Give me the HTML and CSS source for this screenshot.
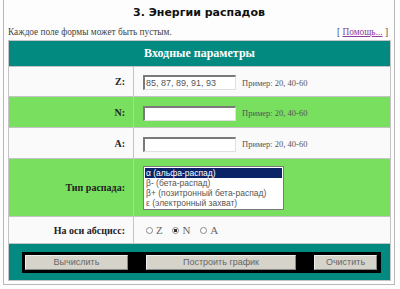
FILE: index.html
```html
<!DOCTYPE html>
<html>
<head>
<meta charset="utf-8">
<link rel="stylesheet" href="styles.css">
</head>
<body>
<div class="page">
  <h1 class="title">3. Энергии распадов</h1>
  <div class="intro">
    <span>Каждое поле формы может быть пустым.</span>
    <span>[ <a href="#" class="help">Помощь...</a> ]</span>
  </div>
  <table class="form">
    <colgroup><col class="c1"><col class="c2"></colgroup>
    <tr><th colspan="2" class="head">Входные параметры</th></tr>
    <tr class="row-white h-z">
      <td class="label">Z:</td>
      <td class="field"><span class="input">85, 87, 89, 91, 93</span><span class="hint">Пример: 20, 40-60</span></td>
    </tr>
    <tr class="row-green h-n">
      <td class="label">N:</td>
      <td class="field"><span class="input"></span><span class="hint">Пример: 20, 40-60</span></td>
    </tr>
    <tr class="row-white h-a">
      <td class="label">A:</td>
      <td class="field"><span class="input"></span><span class="hint">Пример: 20, 40-60</span></td>
    </tr>
    <tr class="row-green h-type">
      <td class="label">Тип распада:</td>
      <td class="field">
        <div class="select">
          <div class="opt sel">α (альфа-распад)</div>
          <div class="opt">β- (бета-распад)</div>
          <div class="opt">β+ (позитронный бета-распад)</div>
          <div class="opt">ε (электронный захват)</div>
        </div>
      </td>
    </tr>
    <tr class="row-white h-axis">
      <td class="label">На оси абсцисс:</td>
      <td class="field radios">
        <span class="radio"></span><span class="rl">Z</span>
        <span class="radio on"></span><span class="rl">N</span>
        <span class="radio"></span><span class="rl">A</span>
      </td>
    </tr>
    <tr>
      <td colspan="2" class="foot">
        <div class="btnbar">
          <span class="btn b1">Вычислить</span>
          <span class="btn b2">Построить график</span>
          <span class="btn b3">Очистить</span>
        </div>
      </td>
    </tr>
  </table>
</div>
</body>
</html>
```
FILE: styles.css
```css
html, body { margin: 0; padding: 0; background: #fdfdfd; }
.page {
  margin-left: 3px;
  width: 392px;
  height: 285px;
  border-left: 1px solid #b8b8b8;
  border-right: 1px solid #b8b8b8;
  border-bottom: 1px solid #b8b8b8;
  padding: 0 4px;
  box-sizing: border-box;
  font-family: "Liberation Serif", serif;
  color: #333;
}
.title {
  margin: 0;
  height: 26px;
  line-height: 25px;
  text-align: center;
  font-family: "DejaVu Sans", sans-serif;
  font-size: 11px;
  font-weight: bold;
  color: #111;
}
.intro {
  display: flex;
  justify-content: space-between;
  font-size: 9.3px;
  line-height: 13px;
  height: 14px;
  color: #444;
  padding-right: 2px;
}
.help { color: #8a3ca0; }
.form {
  width: 383px;
  border-collapse: collapse;
  table-layout: fixed;
}
.c1 { width: 125px; }
.form td, .form th { border: 1px solid #c4c4c4; padding: 0; }
.head {
  background: #038a80;
  color: #fff;
  height: 25px;
  font-size: 12px;
  font-weight: bold;
  text-align: center;
}
.row-white td { background: #fafafa; }
.row-green td { background: #78df5f; }
.label {
  text-align: right;
  padding-right: 8px !important;
  font-weight: bold;
  font-size: 10px;
  color: #222;
}
.h-z td { height: 29px; }
.h-n td { height: 30px; }
.h-a td { height: 30px; }
.h-type td { height: 57px; }
.h-axis td { height: 26px; }
.field { padding-left: 9px !important; }
.input {
  display: inline-block;
  vertical-align: middle;
  width: 89px;
  height: 12px;
  border-top: 2px solid #7a7a7a;
  border-left: 2px solid #7a7a7a;
  border-right: 1px solid #e0e0e0;
  border-bottom: 1px solid #e0e0e0;
  background: #fff;
  font-family: "Liberation Sans", sans-serif;
  font-size: 9px;
  line-height: 12px;
  color: #555;
  padding-left: 1px;
  overflow: hidden;
  white-space: nowrap;
}
.hint {
  display: inline-block;
  vertical-align: middle;
  margin-left: 6px;
  font-size: 8.5px;
  color: #555;
}
.select {
  width: 139px;
  height: 41px;
  border: 1px solid #7a7a7a;
  background: #fff;
  font-family: "Liberation Sans", sans-serif;
  font-size: 8.5px;
  line-height: 10px;
  color: #555;
  padding-top: 1px;
}
.opt { padding-left: 2px; white-space: nowrap; }
.opt.sel { background: #0b2468; color: #fff; margin: 0 1px; padding-left: 1px; }
.radios { font-size: 11px; color: #666; padding-left: 12px !important; }
.radio {
  display: inline-block;
  width: 5px;
  height: 5px;
  border: 1px solid #888;
  border-radius: 50%;
  vertical-align: middle;
  margin-right: 3px;
  position: relative;
  top: -1px;
  background: #fff;
}
.radio.on { background: radial-gradient(circle, #333 1.5px, #fff 2px); }
.rl { margin-right: 7px; }
.foot {
  background: #038a80;
  height: 36px;
  padding: 0 9px 0 13px !important;
}
.btnbar {
  display: flex;
  gap: 18px;
  background: #000;
  padding: 3px;
  width: 353px;
}
.btn {
  display: block;
  height: 13px;
  line-height: 13px;
  background: #d6d3cb;
  border: 1px solid #eee;
  border-right-color: #888;
  border-bottom-color: #888;
  text-align: center;
  font-family: "Liberation Sans", sans-serif;
  font-size: 9px;
  color: #666;
}
.b1 { width: 101px; }
.b2 { width: 148px; }
.b3 { width: 61px; }
```
